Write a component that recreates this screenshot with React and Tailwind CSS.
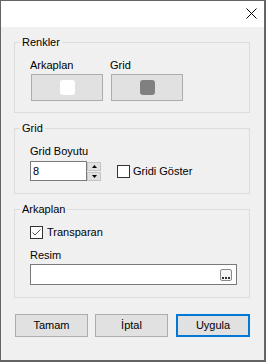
import React from "react";

const font = { fontFamily: '"Liberation Sans", Arial, sans-serif' };

function Legend({ children }) {
  return (
    <legend className="ml-[5px] px-[2px] text-[11px] leading-[13px] text-black">
      {children}
    </legend>
  );
}

function Check({ checked }) {
  return (
    <div className="w-[13px] h-[13px] border border-[#333333] bg-white flex items-center justify-center shrink-0">
      {checked && (
        <svg width="11" height="11" viewBox="0 0 11 11">
          <path d="M1.5 5.5 L4 8 L9.5 2.5" fill="none" stroke="#555555" strokeWidth="1" />
        </svg>
      )}
    </div>
  );
}

function Btn({ children, primary, className = "" }) {
  return (
    <div
      className={
        "h-[23px] bg-[#e1e1e1] flex items-center justify-center text-[11px] leading-[13px] text-black " +
        (primary ? "border-2 border-[#0078d7] " : "border border-[#adadad] ") +
        className
      }
    >
      {children}
    </div>
  );
}

export default function App() {
  return (
    <div
      style={font}
      className="w-[266px] h-[362px] border-l border-t border-r-2 border-b-2 border-[#646464] bg-[#f0f0f0] flex flex-col text-black text-[11px] leading-[13px]"
    >
      {/* title bar */}
      <div className="h-[26px] bg-white flex justify-end items-start pt-[7px] pr-[7px] shrink-0">
        <svg width="11" height="11" viewBox="0 0 11 11">
          <path d="M0.5 0.5 L10.5 10.5 M10.5 0.5 L0.5 10.5" stroke="#000" strokeWidth="1" fill="none" />
        </svg>
      </div>

      <div className="flex flex-col pl-[13px] pt-[9px]">
        {/* Renkler */}
        <fieldset className="w-[236px] border border-[#dcdcdc]">
          <Legend>Renkler</Legend>
          <div className="flex pt-[10px] pl-[15px] pb-[11px]">
            <div className="flex flex-col w-[73px]">
              <div className="h-[13px]">Arkaplan</div>
              <div className="ml-px mt-[2px] w-[72px] h-[27px] bg-[#e1e1e1] border border-[#adadad] flex items-center justify-center">
                <div className="w-[15px] h-[15px] rounded-[3px] bg-white" />
              </div>
            </div>
            <div className="flex flex-col w-[73px] ml-[7px]">
              <div className="h-[13px]">Grid</div>
              <div className="ml-px mt-[2px] w-[72px] h-[27px] bg-[#e1e1e1] border border-[#adadad] flex items-center justify-center">
                <div className="w-[15px] h-[15px] rounded-[3px] bg-[#808080]" />
              </div>
            </div>
          </div>
        </fieldset>

        {/* Grid */}
        <fieldset className="w-[236px] border border-[#dcdcdc] mt-[9px]">
          <Legend>Grid</Legend>
          <div className="flex flex-col pt-[10px] pl-[15px] pb-[12px]">
            <div className="h-[13px]">Grid Boyutu</div>
            <div className="flex items-center mt-[3px] h-[20px]">
              <div className="w-[57px] h-[20px] bg-white border border-[#7a7a7a] flex items-center pl-[2px]">
                8
              </div>
              <div className="w-[14px] h-[20px] flex flex-col pt-px gap-px">
                <div className="h-[9px] bg-[#e1e1e1] border border-[#c4c4c4] flex items-center justify-center">
                  <svg width="5" height="3" viewBox="0 0 5 3">
                    <path d="M2.5 0 L5 3 L0 3 Z" fill="#000" />
                  </svg>
                </div>
                <div className="h-[9px] bg-[#e1e1e1] border border-[#c4c4c4] flex items-center justify-center">
                  <svg width="5" height="3" viewBox="0 0 5 3">
                    <path d="M0 0 L5 0 L2.5 3 Z" fill="#000" />
                  </svg>
                </div>
              </div>
              <div className="ml-[16px] flex items-center">
                <Check />
                <span className="ml-[3px]">Gridi Göster</span>
              </div>
            </div>
          </div>
        </fieldset>

        {/* Arkaplan */}
        <fieldset className="w-[236px] border border-[#dcdcdc] mt-[9px]">
          <Legend>Arkaplan</Legend>
          <div className="flex flex-col pt-[10px] pl-[15px] pb-[12px]">
            <div className="flex items-center h-[13px]">
              <Check checked />
              <span className="ml-[4px]">Transparan</span>
            </div>
            <div className="h-[13px] mt-[10px]">Resim</div>
            <div className="mt-[2px] w-[207px] h-[21px] bg-white border border-[#7a7a7a] flex items-center justify-end pr-[4px]">
              <div className="w-[12px] h-[12px] border border-[#8a8a8a] rounded-[2px] bg-[#f4f4f4] flex items-end justify-center pb-[1px]">
                <svg width="8" height="2" viewBox="0 0 8 2">
                  <rect x="0" y="0" width="2" height="2" fill="#333" />
                  <rect x="3" y="0" width="2" height="2" fill="#333" />
                  <rect x="6" y="0" width="2" height="2" fill="#333" />
                </svg>
              </div>
            </div>
          </div>
        </fieldset>

        {/* buttons */}
        <div className="flex mt-[16px]">
          <Btn className="ml-px w-[73px]">Tamam</Btn>
          <Btn className="ml-[7px] w-[73px]">İptal</Btn>
          <Btn primary className="ml-[8px] w-[74px]">Uygula</Btn>
        </div>
      </div>
    </div>
  );
}
